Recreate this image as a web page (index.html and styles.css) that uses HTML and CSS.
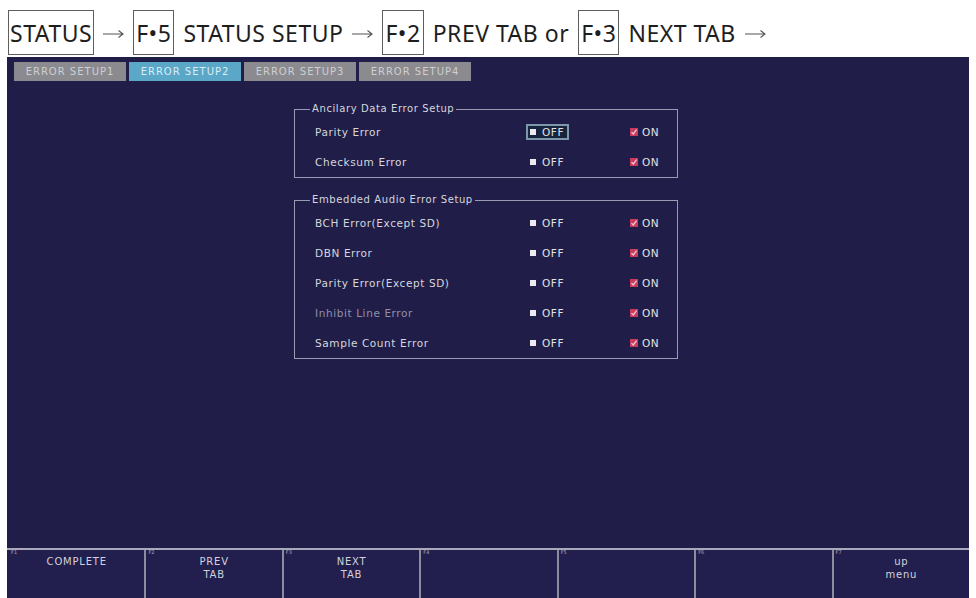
FILE: index.html
```html
<!DOCTYPE html>
<html>
<head>
<meta charset="utf-8">
<link rel="stylesheet" href="styles.css">
</head>
<body>
<div class="page">
  <div class="crumbs">
    <span class="key">STATUS</span>
    <svg class="arr" viewBox="0 0 21 10"><path d="M0 5H20M15.5 1.5L20 5L15.5 8.5" fill="none" stroke="#555" stroke-width="1.1"/></svg>
    <span class="key">F•5</span>
    <span class="txt">STATUS SETUP</span>
    <svg class="arr" viewBox="0 0 21 10"><path d="M0 5H20M15.5 1.5L20 5L15.5 8.5" fill="none" stroke="#555" stroke-width="1.1"/></svg>
    <span class="key">F•2</span>
    <span class="txt">PREV TAB or</span>
    <span class="key">F•3</span>
    <span class="txt">NEXT TAB</span>
    <svg class="arr" viewBox="0 0 21 10"><path d="M0 5H20M15.5 1.5L20 5L15.5 8.5" fill="none" stroke="#555" stroke-width="1.1"/></svg>
  </div>
  <div class="screen">
    <div class="tabs">
      <div class="tab">ERROR SETUP1</div>
      <div class="tab active">ERROR SETUP2</div>
      <div class="tab">ERROR SETUP3</div>
      <div class="tab">ERROR SETUP4</div>
    </div>
    <div class="main">
      <fieldset class="group">
        <legend>Ancilary Data Error Setup</legend>
        <div class="row">
          <span class="lbl">Parity Error</span>
          <span class="opt focus"><i class="sq"></i>OFF</span>
          <span class="opt"><svg class="ck" viewBox="0 0 8 8"><rect width="8" height="8" fill="#c93a5c"/><polyline points="1.5,4.2 3.3,6 6.6,1.6" fill="none" stroke="#f2c6d4" stroke-width="1.3"/></svg>ON</span>
        </div>
        <div class="row">
          <span class="lbl">Checksum Error</span>
          <span class="opt"><i class="sq"></i>OFF</span>
          <span class="opt"><svg class="ck" viewBox="0 0 8 8"><rect width="8" height="8" fill="#c93a5c"/><polyline points="1.5,4.2 3.3,6 6.6,1.6" fill="none" stroke="#f2c6d4" stroke-width="1.3"/></svg>ON</span>
        </div>
      </fieldset>
      <fieldset class="group">
        <legend>Embedded Audio Error Setup</legend>
        <div class="row">
          <span class="lbl">BCH Error(Except SD)</span>
          <span class="opt"><i class="sq"></i>OFF</span>
          <span class="opt"><svg class="ck" viewBox="0 0 8 8"><rect width="8" height="8" fill="#c93a5c"/><polyline points="1.5,4.2 3.3,6 6.6,1.6" fill="none" stroke="#f2c6d4" stroke-width="1.3"/></svg>ON</span>
        </div>
        <div class="row">
          <span class="lbl">DBN Error</span>
          <span class="opt"><i class="sq"></i>OFF</span>
          <span class="opt"><svg class="ck" viewBox="0 0 8 8"><rect width="8" height="8" fill="#c93a5c"/><polyline points="1.5,4.2 3.3,6 6.6,1.6" fill="none" stroke="#f2c6d4" stroke-width="1.3"/></svg>ON</span>
        </div>
        <div class="row">
          <span class="lbl">Parity Error(Except SD)</span>
          <span class="opt"><i class="sq"></i>OFF</span>
          <span class="opt"><svg class="ck" viewBox="0 0 8 8"><rect width="8" height="8" fill="#c93a5c"/><polyline points="1.5,4.2 3.3,6 6.6,1.6" fill="none" stroke="#f2c6d4" stroke-width="1.3"/></svg>ON</span>
        </div>
        <div class="row">
          <span class="lbl dim">Inhibit Line Error</span>
          <span class="opt"><i class="sq"></i>OFF</span>
          <span class="opt"><svg class="ck" viewBox="0 0 8 8"><rect width="8" height="8" fill="#c93a5c"/><polyline points="1.5,4.2 3.3,6 6.6,1.6" fill="none" stroke="#f2c6d4" stroke-width="1.3"/></svg>ON</span>
        </div>
        <div class="row">
          <span class="lbl">Sample Count Error</span>
          <span class="opt"><i class="sq"></i>OFF</span>
          <span class="opt"><svg class="ck" viewBox="0 0 8 8"><rect width="8" height="8" fill="#c93a5c"/><polyline points="1.5,4.2 3.3,6 6.6,1.6" fill="none" stroke="#f2c6d4" stroke-width="1.3"/></svg>ON</span>
        </div>
      </fieldset>
    </div>
    <div class="fkeys">
      <div class="fk"><span class="fn">F1</span><span class="fl">COMPLETE</span></div>
      <div class="fk"><span class="fn">F2</span><span class="fl">PREV<br>TAB</span></div>
      <div class="fk"><span class="fn">F3</span><span class="fl">NEXT<br>TAB</span></div>
      <div class="fk"><span class="fn">F4</span><span class="fl"></span></div>
      <div class="fk"><span class="fn">F5</span><span class="fl"></span></div>
      <div class="fk"><span class="fn">F6</span><span class="fl"></span></div>
      <div class="fk"><span class="fn">F7</span><span class="fl">up<br>menu</span></div>
    </div>
  </div>
</div>
</body>
</html>
```

FILE: styles.css
```css
* { box-sizing: border-box; }
html, body { margin: 0; padding: 0; background: #fff; }
body {
  width: 976px;
  height: 598px;
  overflow: hidden;
  font-family: "DejaVu Sans", "Liberation Sans", sans-serif;
}
.page { padding-left: 7px; }

.crumbs {
  display: flex;
  align-items: center;
  gap: 9px;
  height: 57px;
  padding: 10px 0 2px 1px;
  font-family: "Noto Sans", "DejaVu Sans", sans-serif;
  font-size: 23px;
  letter-spacing: 0.5px;
  color: #1e1e1e;
}
.key {
  display: flex;
  align-items: center;
  height: 45px;
  padding: 0 2px;
  border: 1px solid #5e5e5e;
}
.key:first-child { padding: 0 1px; }
.arr { width: 21px; height: 10px; margin-top: 2px; }

.screen {
  width: 962px;
  height: 541px;
  background: #201e48;
  display: flex;
  flex-direction: column;
}

.tabs {
  display: flex;
  gap: 3px;
  padding: 5px 0 0 7px;
}
.tab {
  width: 112px;
  height: 19px;
  display: flex;
  align-items: center;
  justify-content: center;
  background: #8a8a8f;
  color: #cfcfd2;
  font-size: 10px;
  letter-spacing: 1px;
}
.tab.active { background: #5aa7c8; color: #d9edf5; }

.main {
  flex: 1;
  display: flex;
  flex-direction: column;
  gap: 16px;
  padding: 22px 0 0 287px;
}
.group {
  width: 384px;
  margin: 0;
  padding: 2px 0 0 0;
  border: 1px solid #9a9ab2;
  color: #d6d6de;
  font-size: 10.5px;
  letter-spacing: 0.6px;
}
.group legend {
  margin-left: 15px;
  padding: 0 2px;
  line-height: 12px;
  font-size: 10px;
  color: #d6d6de;
}
.row {
  display: grid;
  grid-template-columns: 215px 100px 1fr;
  align-items: center;
  height: 30px;
  padding-left: 20px;
}
.lbl.dim { color: #9090aa; }
.opt {
  display: inline-flex;
  align-items: center;
  justify-self: start;
  height: 16px;
  margin-left: -4px;
  padding: 0 3px 0 2px;
  border: 2px solid transparent;
  color: #e2e2e6;
}
.opt.focus { border-color: #7f98a9; background: #18243e; }
.sq {
  display: inline-block;
  width: 6px;
  height: 6px;
  margin-right: 6px;
  background: #ececf0;
}
.ck { width: 8px; height: 8px; margin-right: 4px; }

.fkeys {
  display: grid;
  grid-template-columns: repeat(7, 1fr);
  height: 50px;
  border-top: 2px solid #a9a9bb;
  background: #221f4f;
}
.fk {
  display: flex;
  flex-direction: column;
  border-left: 2px solid #8c8c9e;
}
.fk:first-child { border-left-color: transparent; }
.fn {
  height: 5px;
  padding-left: 2px;
  font-size: 5px;
  line-height: 5px;
  color: #a6a6b4;
}
.fl {
  text-align: center;
  font-size: 10px;
  line-height: 13px;
  letter-spacing: 0.8px;
  color: #d2d2da;
}
```
